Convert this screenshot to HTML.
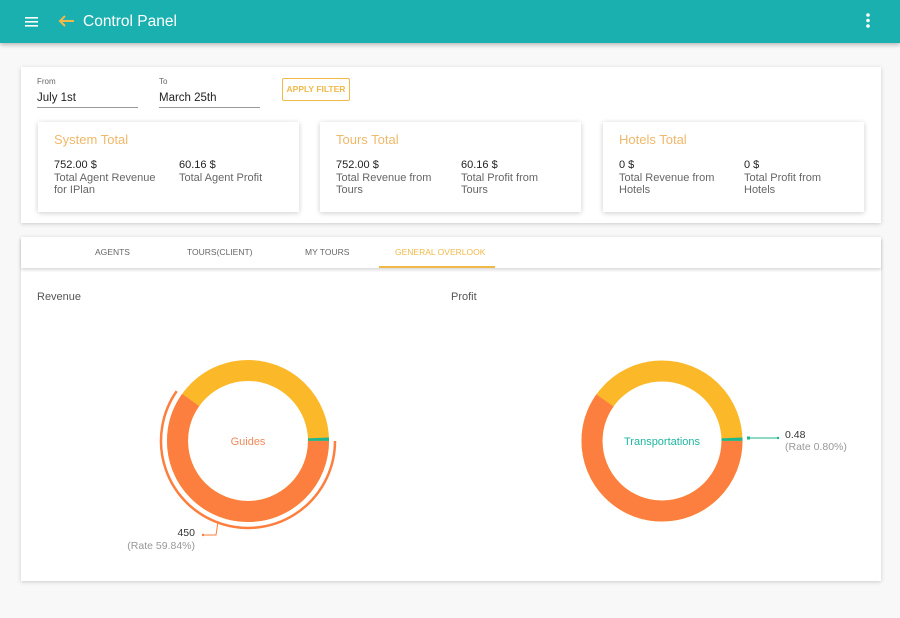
<!DOCTYPE html>
<html><head><meta charset="utf-8">
<style>
*{box-sizing:border-box;margin:0;padding:0}
body{width:900px;height:618px;background:#f8f8f8;font-family:"Liberation Sans",sans-serif;position:relative;overflow:hidden}
.hdr{position:absolute;left:0;top:0;width:900px;height:43px;background:#1ab0b0;box-shadow:0 2px 4px rgba(0,0,0,.25)}
.hdr .t{position:absolute;left:83px;top:13px;color:#fff;font-size:15.5px}
.card{position:absolute;background:#fff;box-shadow:0 1px 4px rgba(0,0,0,.18)}
.lbl{position:absolute;font-size:8px;color:#666}
.inp{position:absolute;font-size:11.5px;color:#222;border-bottom:1px solid #999;padding-bottom:3px}
.btn{position:absolute;left:282px;top:78px;width:68px;height:23px;border:1.5px solid #f0b94a;color:#f0b94a;font-size:8.5px;font-weight:bold;text-align:center;line-height:20px;border-radius:2px}
.sc{position:absolute;top:122px;width:261px;height:90px;background:#fff;box-shadow:0 1px 5px rgba(0,0,0,.2)}
.sc h3{position:absolute;left:16px;top:10px;font-weight:normal;color:#f0b86a;font-size:13px}
.sc .c{position:absolute;top:37px;font-size:11px;color:#222;line-height:12.5px;width:105px}
.sc .c span{color:#666}
.tab{position:absolute;top:247px;font-size:8.5px;color:#666}
</style></head><body>
<div class="hdr">
<svg style="position:absolute;left:25px;top:16px" width="14" height="12"><rect y="1" width="13" height="1.6" fill="#fff"/><rect y="5" width="13" height="1.6" fill="#fff"/><rect y="9" width="13" height="1.6" fill="#fff"/></svg>
<svg style="position:absolute;left:57px;top:14px" width="18" height="14"><path d="M17 7H3M8 2L3 7l5 5" stroke="#f0b94a" stroke-width="2" fill="none"/></svg>
<div class="t">Control Panel</div>
<svg style="position:absolute;left:864px;top:12px" width="8" height="18"><circle cx="4" cy="3" r="1.8" fill="#fff"/><circle cx="4" cy="8.5" r="1.8" fill="#fff"/><circle cx="4" cy="14" r="1.8" fill="#fff"/></svg>
</div>

<div class="card" style="left:21px;top:67px;width:860px;height:156px"></div>
<div class="lbl" style="left:37px;top:77px">From</div>
<div class="inp" style="left:37px;top:92px;width:101px">July 1st</div>
<div class="lbl" style="left:159px;top:77px">To</div>
<div class="inp" style="left:159px;top:92px;width:101px">March 25th</div>
<div class="btn">APPLY FILTER</div>

<div class="sc" style="left:38px"><h3>System Total</h3>
<div class="c" style="left:16px">752.00 $<br><span>Total Agent Revenue<br>for IPlan</span></div>
<div class="c" style="left:141px">60.16 $<br><span>Total Agent Profit</span></div></div>
<div class="sc" style="left:320px"><h3>Tours Total</h3>
<div class="c" style="left:16px;width:100px">752.00 $<br><span>Total Revenue from Tours</span></div>
<div class="c" style="left:141px;width:90px">60.16 $<br><span>Total Profit from Tours</span></div></div>
<div class="sc" style="left:603px"><h3>Hotels Total</h3>
<div class="c" style="left:16px;width:100px">0 $<br><span>Total Revenue from Hotels</span></div>
<div class="c" style="left:141px;width:90px">0 $<br><span>Total Profit from Hotels</span></div></div>

<div class="card" style="left:21px;top:237px;width:860px;height:344px"></div>
<div style="position:absolute;left:21px;top:237px;width:860px;height:31px;background:#fff;box-shadow:0 2px 3px rgba(0,0,0,.15)"></div>
<div class="tab" style="left:95px">AGENTS</div>
<div class="tab" style="left:187px">TOURS(CLIENT)</div>
<div class="tab" style="left:305px">MY TOURS</div>
<div class="tab" style="left:395px;color:#f0b94a">GENERAL OVERLOOK</div>
<div style="position:absolute;left:379px;top:266px;width:116px;height:2px;background:#f0b94a"></div>
<div style="position:absolute;left:37px;top:291px;font-size:11px;color:#555">Revenue</div>
<div style="position:absolute;left:451px;top:291px;font-size:11px;color:#555">Profit</div>

<svg style="position:absolute;left:0;top:0" width="900" height="618">
<g transform="translate(248,441)">
<circle r="70.5" fill="none" stroke="#fbb829" stroke-width="21"/>
<circle r="70.5" fill="none" stroke="#fd7f3f" stroke-width="21" stroke-dasharray="265.1 500"/>
<circle r="70.5" fill="none" stroke="#1fb58f" stroke-width="21" stroke-dasharray="3 500" transform="rotate(-2.5)"/>
<path d="M87 0A87 87 0 1 1 -71.3 -49.9" fill="none" stroke="#fd7f3f" stroke-width="2.5"/>
<text x="0" y="4" text-anchor="middle" font-size="11" fill="#f08a5a" font-family="Liberation Sans">Guides</text>
</g>
<path d="M218 522L216 535H203" fill="none" stroke="#fd7f3f" stroke-width="1"/>
<circle cx="203" cy="535" r="1.2" fill="#fd7f3f"/>
<text x="195" y="536" text-anchor="end" font-size="10.5" fill="#333" font-family="Liberation Sans">450</text>
<text x="195" y="549" text-anchor="end" font-size="10.5" fill="#999" font-family="Liberation Sans">(Rate 59.84%)</text>
<g transform="translate(662,441)">
<circle r="70" fill="none" stroke="#fbb829" stroke-width="21"/>
<circle r="70" fill="none" stroke="#fd7f3f" stroke-width="21" stroke-dasharray="263 500"/>
<circle r="70" fill="none" stroke="#1fb58f" stroke-width="21" stroke-dasharray="3 500" transform="rotate(-2.5)"/>
<text x="0" y="4" text-anchor="middle" font-size="11" fill="#1fb5a0" font-family="Liberation Sans">Transportations</text>
</g>
<path d="M748 438H778" stroke="#1fb58f" stroke-width="1"/>
<rect x="747" y="436.5" width="3" height="3" fill="#1fb58f"/>
<circle cx="778" cy="438" r="1.2" fill="#1fb58f"/>
<text x="785" y="438" font-size="10.5" fill="#333" font-family="Liberation Sans">0.48</text>
<text x="785" y="450" font-size="10.5" fill="#999" font-family="Liberation Sans">(Rate 0.80%)</text>
</svg>
</body></html>
